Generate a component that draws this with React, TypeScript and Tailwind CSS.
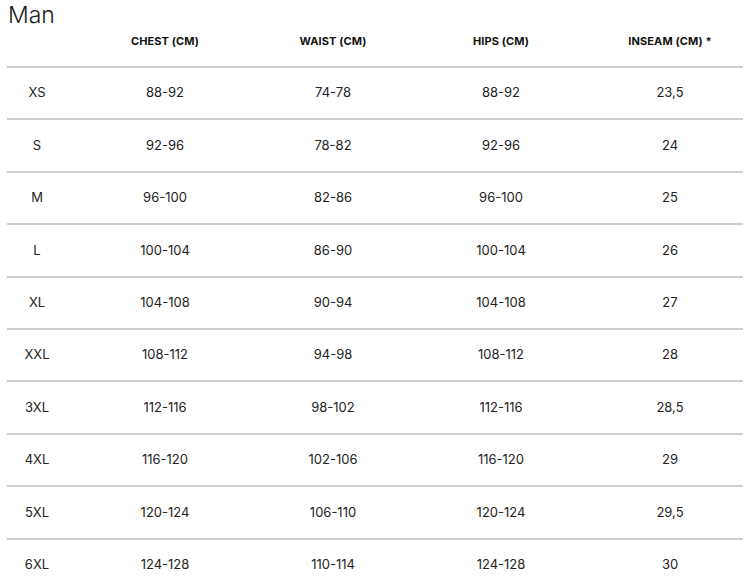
const headers = ["", "CHEST (CM)", "WAIST (CM)", "HIPS (CM)", "INSEAM (CM) *"];

const rows: string[][] = [
  ["XS", "88-92", "74-78", "88-92", "23,5"],
  ["S", "92-96", "78-82", "92-96", "24"],
  ["M", "96-100", "82-86", "96-100", "25"],
  ["L", "100-104", "86-90", "100-104", "26"],
  ["XL", "104-108", "90-94", "104-108", "27"],
  ["XXL", "108-112", "94-98", "108-112", "28"],
  ["3XL", "112-116", "98-102", "112-116", "28,5"],
  ["4XL", "116-120", "102-106", "116-120", "29"],
  ["5XL", "120-124", "106-110", "120-124", "29,5"],
  ["6XL", "124-128", "110-114", "124-128", "30"],
];

const cols = "grid grid-cols-[60px_196px_140px_196px_142px]";

export default function App() {
  return (
    <div className="w-[750px] h-[585px] overflow-hidden bg-white px-[7px] text-[#222] font-['Inter','Liberation_Sans',sans-serif]">
      {/* Title */}
      <h1 className="h-[30px] pl-px text-[23px] font-light leading-[30px] text-[#1a1a1a]">Man</h1>

      {/* Header row */}
      <div className={`${cols} h-[36px] items-start pt-[3px]`}>
        {headers.map((h, i) => (
          <div key={i} className="text-center text-[11px] font-bold tracking-[0.1px] text-[#111]">
            {h}
          </div>
        ))}
      </div>

      {/* Body rows */}
      {rows.map((r) => (
        <div key={r[0]} className={`${cols} h-[52.4px] items-center border-t-2 border-[#cfcfcf]`}>
          {r.map((c, i) => (
            <div key={i} className="text-center text-[13px] text-[#222]">
              {c}
            </div>
          ))}
        </div>
      ))}
    </div>
  );
}
